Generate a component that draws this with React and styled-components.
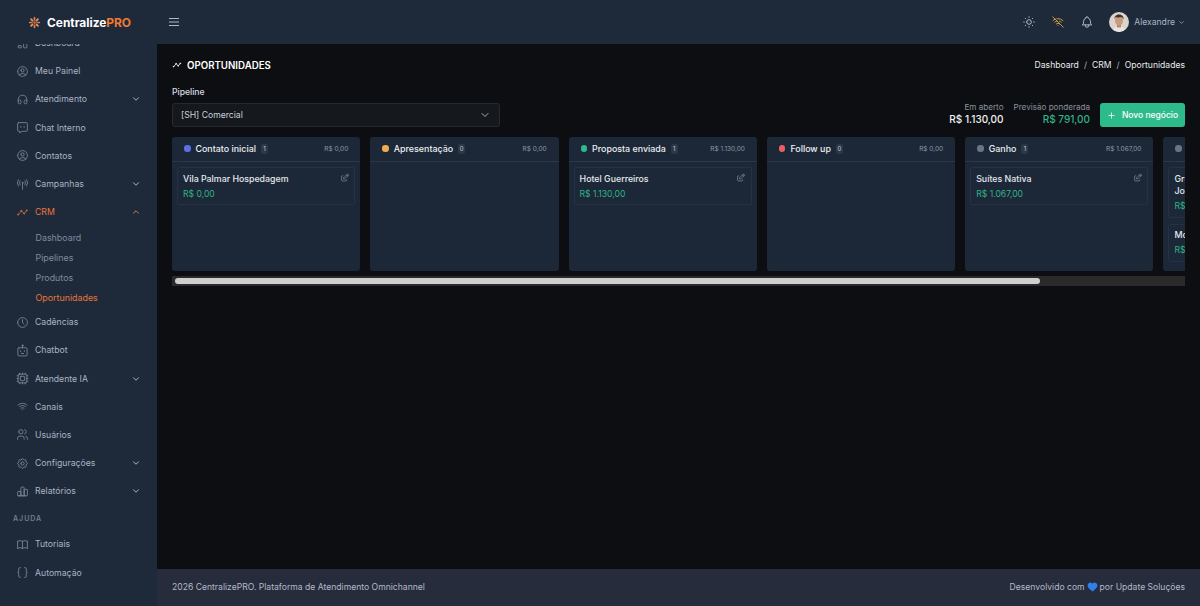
import React from "react";
import styled, { createGlobalStyle } from "styled-components";
import {
	TbLayoutDashboard, TbUserCircle, TbHeadphones, TbTimeline, TbClock,
	TbWifi, TbUsers, TbSettings, TbChartBar, TbBook, TbChevronDown,
	TbChevronUp, TbMenu2, TbSun, TbWifiOff, TbBell, TbEdit, TbPlus,
} from "react-icons/tb";
import { Cpu, Braces } from "lucide-react";

const Global = createGlobalStyle`
	* { box-sizing: border-box; }
	html, body { margin: 0; height: 100%; background: #0c0e12; }
	body { font-family: "Inter", "Liberation Sans", sans-serif; color: #fff; overflow: hidden; }
`;

const Shell = styled.div`
	display: grid;
	grid-template-columns: 157px 1fr;
	height: 606px;
`;

const Sidebar = styled.aside`
	background: #1e2a3a;
	display: flex;
	flex-direction: column;
	overflow: hidden;
	min-height: 0;
`;

const Brand = styled.div`
	height: 44px;
	flex: none;
	display: flex;
	align-items: center;
	gap: 6px;
	padding-left: 28px;
	background: #1e2a3a;
	position: relative;
	z-index: 1;
`;

const BrandName = styled.span`
	font-size: 11.9px;
	font-weight: 700;
	color: #fff;
	b { color: #ef7a33; font-weight: 700; }
`;

const NavScroll = styled.nav`
	flex: 1;
	min-height: 0;
	overflow: hidden;
`;

const NavList = styled.div`
	margin-top: -15px;
	display: flex;
	flex-direction: column;
`;

const NavItem = styled.div`
	height: 28.2px;
	display: flex;
	align-items: center;
	padding: 0 16px;
	gap: 6px;
	font-size: 8.7px;
	color: ${(p) => (p.$active ? "#e8743b" : "#a9b4c4")};
	svg.main { width: 13px; height: 13px; flex: none; stroke-width: 1.4; color: ${(p) => (p.$active ? "#e8743b" : "#8592a6")}; }
`;

const NavLabel = styled.span`
	flex: 1;
`;

const Caret = styled.span`
	display: flex;
	font-size: ${(p) => p.$size || 10}px;
	margin-left: ${(p) => p.$pull || 0}px;
	svg { stroke-width: 2.4; }
`;

const SubList = styled.div`
	display: flex;
	flex-direction: column;
	padding-top: 1px;
`;

const SubItem = styled.div`
	height: 20.2px;
	display: flex;
	align-items: center;
	padding-left: 35.5px;
	font-size: 8.9px;
	color: ${(p) => (p.$active ? "#e8743b" : "#7f8b9d")};
`;

const NavSection = styled.div`
	height: 25px;
	padding-top: 1px;
	display: flex;
	align-items: center;
	padding-left: 13px;
	font-size: 7px;
	font-weight: 600;
	letter-spacing: 1px;
	color: #727e90;
`;

const Main = styled.div`
	display: flex;
	flex-direction: column;
	min-width: 0;
	min-height: 0;
`;

const Topbar = styled.header`
	height: 44px;
	flex: none;
	background: #1e2a3a;
	display: flex;
	align-items: center;
	justify-content: space-between;
	padding: 0 15px 0 10px;
`;

const IconBtn = styled.span`
	display: flex;
	font-size: ${(p) => p.$size || 14}px;
	color: ${(p) => p.$color || "#c3cbd6"};
	svg { stroke-width: 1.5; }
`;

const TopRight = styled.div`
	display: flex;
	align-items: center;
	gap: 15px;
`;

const UserBox = styled.div`
	display: flex;
	align-items: center;
	gap: 5px;
	font-size: 8.6px;
	color: #a9b4c4;
`;

const Avatar = styled.svg`
	width: 20px;
	height: 20px;
	border-radius: 50%;
`;

const Content = styled.main`
	flex: 1;
	min-height: 0;
	background: #0c0e12;
	padding: 14px 15px 0;
	display: flex;
	flex-direction: column;
`;

const TitleRow = styled.div`
	display: flex;
	align-items: center;
	justify-content: space-between;
	height: 14px;
`;

const PageTitle = styled.h1`
	margin: 0;
	display: flex;
	align-items: center;
	gap: 5px;
	font-size: 9.7px;
	font-weight: 600;
	color: #fff;
	svg { font-size: 10px; stroke-width: 1.8; }
`;

const Crumbs = styled.div`
	display: flex;
	gap: 5px;
	font-size: 8.6px;
	color: #e8ebef;
	i { font-style: normal; color: #a9b4c4; }
`;

const ToolRow = styled.div`
	display: flex;
	align-items: flex-end;
	justify-content: space-between;
	margin-top: 15px;
`;

const Field = styled.div`
	width: 328px;
`;

const FieldLabel = styled.div`
	font-size: 8.6px;
	font-weight: 500;
	color: #d9dde3;
	line-height: 11px;
	margin-bottom: 5px;
`;

const SelectBox = styled.div`
	height: 24px;
	border: 1px solid #252a31;
	background: #15181d;
	border-radius: 3px;
	display: flex;
	align-items: center;
	justify-content: space-between;
	padding: 0 8px;
	font-size: 8.65px;
	color: #ccd1d8;
	svg { font-size: 12px; color: #a9afb8; }
`;

const Stats = styled.div`
	display: flex;
	align-items: flex-end;
	gap: 10px;
`;

const Stat = styled.div`
	text-align: right;
`;

const StatLabel = styled.div`
	font-size: 8.1px;
	color: #8b929c;
	line-height: 10px;
`;

const StatValue = styled.div`
	font-size: 10px;
	font-weight: 500;
	line-height: 15px;
	color: ${(p) => (p.$green ? "#2fb387" : "#f2f3f5")};
`;

const PrimaryBtn = styled.button`
	height: 24px;
	width: 85px;
	border: 0;
	border-radius: 3px;
	background: #2dbb8c;
	color: #fff;
	font: inherit;
	font-size: 8.5px;
	font-weight: 500;
	white-space: nowrap;
	padding: 0;
	display: flex;
	align-items: center;
	justify-content: center;
	gap: 6px;
	svg { font-size: 9px; stroke-width: 2; }
`;

const Board = styled.div`
	margin-top: 10px;
	display: flex;
	gap: 10px;
	overflow: hidden;
`;

const Column = styled.section`
	flex: 0 0 188.3px;
	height: 134px;
	background: #1c2838;
	border-radius: 3px;
	overflow: hidden;
`;

const ColumnHead = styled.div`
	height: 25px;
	display: flex;
	align-items: center;
	padding: 0 12px 1px;
	border-bottom: 1px solid #2b3749;
`;

const Dot = styled.span`
	width: 6.5px;
	height: 6.5px;
	border-radius: 50%;
	background: ${(p) => p.$color};
	margin-right: 5px;
	flex: none;
`;

const ColumnName = styled.span`
	font-size: 8.9px;
	font-weight: 500;
	color: #eef0f3;
`;

const Count = styled.span`
	margin-left: 5px;
	width: 7px;
	height: 10px;
	border-radius: 2px;
	background: #2c3748;
	color: #c8ced7;
	font-size: 6px;
	display: flex;
	align-items: center;
	justify-content: center;
`;

const ColumnTotal = styled.span`
	margin-left: auto;
	font-size: 6.5px;
	color: #8f99a8;
`;

const ColumnBody = styled.div`
	padding: 5px 5px 0;
	display: flex;
	flex-direction: column;
	gap: 6px;
`;

const Card = styled.article`
	border: 1px solid #263244;
	border-radius: 2px;
	padding: 4.5px 5px 4.5px;
	position: relative;
`;

const CardName = styled.div`
	font-size: 8.8px;
	font-weight: 500;
	line-height: 12.5px;
	color: #e6e9ed;
	padding-right: 16px;
`;

const CardValue = styled.div`
	margin-top: 2.5px;
	font-size: 8.6px;
	line-height: 12px;
	color: #2fb387;
`;

const EditIcon = styled(TbEdit)`
	position: absolute;
	top: 5px;
	right: 5px;
	font-size: 9.5px;
	stroke-width: 1.6;
	color: #8f99a8;
`;

const ScrollTrack = styled.div`
	margin-top: 5px;
	height: 10px;
	background: #2a2a2a;
	padding: 2px 145px 2px 3px;
`;

const ScrollThumb = styled.div`
	height: 6px;
	background: #cfcfcf;
	border-radius: 3px;
`;

const Footer = styled.footer`
	height: 37px;
	flex: none;
	background: #262c3c;
	display: flex;
	align-items: center;
	justify-content: space-between;
	padding: 0 15px 2px;
	font-size: 8.6px;
	color: #b3bac6;
`;

const Credit = styled.span`
	display: flex;
	align-items: center;
	gap: 2px;
`;

const ChatIcon = ({ className }) => (
	<svg className={className} viewBox="0 0 24 24" fill="none" stroke="currentColor" strokeLinecap="round" strokeLinejoin="round">
		<path d="M5 3h14a2 2 0 0 1 2 2v12a2 2 0 0 1-2 2h-8l-4 3v-3H5a2 2 0 0 1-2-2V5a2 2 0 0 1 2-2z" />
		<path d="M9 11h.01M15 11h.01" strokeWidth="2.4" />
	</svg>
);

const AntennaIcon = ({ className }) => (
	<svg className={className} viewBox="0 0 24 24" fill="none" stroke="currentColor" strokeLinecap="round" strokeLinejoin="round">
		<path d="M12 11v10" />
		<circle cx="12" cy="9" r="1" />
		<path d="M7.500 5.500a6 6 0 0 0 0 7M16.500 5.500a6 6 0 0 1 0 7M4.500 3a10 10 0 0 0 0 12M19.500 3a10 10 0 0 1 0 12" />
	</svg>
);

const BotIcon = ({ className }) => (
	<svg className={className} viewBox="0 0 24 24" fill="none" stroke="currentColor" strokeLinecap="round" strokeLinejoin="round">
		<rect x="3.500" y="7" width="17" height="15" rx="2" />
		<path d="M12 7V3.500" />
		<circle cx="12" cy="2.500" r="1" />
		<path d="M8.500 13h.01M15.500 13h.01" strokeWidth="2.4" />
		<path d="M10 17.500h4" />
	</svg>
);

const menu = [
	{ icon: TbLayoutDashboard, label: "Dashboard" },
	{ icon: TbUserCircle, label: "Meu Painel" },
	{ icon: TbHeadphones, label: "Atendimento", caret: true },
	{ icon: ChatIcon, label: "Chat Interno" },
	{ icon: TbUserCircle, label: "Contatos" },
	{ icon: AntennaIcon, label: "Campanhas", caret: true },
	{ icon: TbTimeline, label: "CRM", active: true, sub: ["Dashboard", "Pipelines", "Produtos", "Oportunidades"] },
	{ icon: TbClock, label: "Cadências" },
	{ icon: BotIcon, label: "Chatbot" },
	{ icon: Cpu, label: "Atendente IA", caret: true },
	{ icon: TbWifi, label: "Canais" },
	{ icon: TbUsers, label: "Usuários" },
	{ icon: TbSettings, label: "Configurações", caret: true },
	{ icon: TbChartBar, label: "Relatórios", caret: true },
	{ section: "AJUDA" },
	{ icon: TbBook, label: "Tutoriais" },
	{ icon: Braces, label: "Automação" },
];

const columns = [
	{ name: "Contato inicial", color: "#5d6ee6", count: 1, total: "R$ 0,00", cards: [{ name: "Vila Palmar Hospedagem", value: "R$ 0,00" }] },
	{ name: "Apresentação", color: "#f0ad4e", count: 0, total: "R$ 0,00", cards: [] },
	{ name: "Proposta enviada", color: "#2dbb8c", count: 1, total: "R$ 1.130,00", cards: [{ name: "Hotel Guerreiros", value: "R$ 1.130,00" }] },
	{ name: "Follow up", color: "#ee5d63", count: 0, total: "R$ 0,00", cards: [] },
	{ name: "Ganho", color: "#6b7480", count: 1, total: "R$ 1.067,00", cards: [{ name: "Suítes Nativa", value: "R$ 1.067,00" }] },
	{ name: "Perdido", color: "#6b7480", count: 2, total: "R$ 0,00", cards: [
		{ name: "Grupo Hoteleiro Vale do Sol Joinville Norte", value: "R$ 0,00" },
		{ name: "Morada do Sol", value: "R$ 0,00" },
	] },
];

const Logo = () => (
	<svg width="13" height="13" viewBox="0 0 24 24">
		{[0, 45, 90, 135, 180, 225, 270, 315].map((a, i) => (
			<g key={a} transform={`rotate(${a} 12 12)`}>
				<rect x="10.4" y="1.5" width="3.2" height="7" rx="1.6" fill={i % 2 ? "#c9a27c" : "#ef7a33"} />
			</g>
		))}
		<circle cx="12" cy="12" r="2.6" fill="#d9572a" />
	</svg>
);

const UserPhoto = () => (
	<Avatar viewBox="0 0 40 40">
		<rect width="40" height="40" fill="#d9d4cc" />
		<path d="M6 40c1-8 7-11 14-11s13 3 14 11z" fill="#e9e6e1" />
		<rect x="16" y="23" width="8" height="8" fill="#b98a6e" />
		<ellipse cx="20" cy="17" rx="8" ry="10" fill="#c99a7c" />
		<path d="M11 15c-1-7 4-10 9-10s10 3 9 10c-1-3-3-5-5-5-4 1-8 1-10 0-2 1-3 3-3 5z" fill="#3d332c" />
	</Avatar>
);

const Heart = () => (
	<svg width="11" height="10" viewBox="0 0 24 22">
		<path d="M12 21C5 15 1 11.500 1 7a6 6 0 0 1 11-3 6 6 0 0 1 11 3c0 4.500-4 8-11 14z" fill="#2f80e8" />
	</svg>
);

export default function App() {
	return (
		<Shell>
			<Global />
			<Sidebar>
				<Brand>
					<Logo />
					<BrandName>Centralize<b>PRO</b></BrandName>
				</Brand>
				<NavScroll>
					<NavList>
						{menu.map((m) =>
							m.section ? (
								<NavSection key={m.section}>{m.section}</NavSection>
							) : (
								<React.Fragment key={m.label}>
									<NavItem $active={m.active}>
										<m.icon className="main" />
										<NavLabel>{m.label}</NavLabel>
										{m.caret && <Caret><TbChevronDown /></Caret>}
										{m.sub && <Caret><TbChevronUp /></Caret>}
									</NavItem>
									{m.sub && (
										<SubList>
											{m.sub.map((s) => (
												<SubItem key={s} $active={s === "Oportunidades"}>{s}</SubItem>
											))}
										</SubList>
									)}
								</React.Fragment>
							)
						)}
					</NavList>
				</NavScroll>
			</Sidebar>
			<Main>
				<Topbar>
					<IconBtn $size={14}><TbMenu2 /></IconBtn>
					<TopRight>
						<IconBtn><TbSun /></IconBtn>
						<IconBtn $color="#e0a63f"><TbWifiOff /></IconBtn>
						<IconBtn><TbBell /></IconBtn>
						<UserBox>
							<UserPhoto />
							Alexandre
							<Caret $size={7} $pull={-2}><TbChevronDown /></Caret>
						</UserBox>
					</TopRight>
				</Topbar>
				<Content>
					<TitleRow>
						<PageTitle><TbTimeline /> OPORTUNIDADES</PageTitle>
						<Crumbs>Dashboard <i>/</i> CRM <i>/</i> Oportunidades</Crumbs>
					</TitleRow>
					<ToolRow>
						<Field>
							<FieldLabel>Pipeline</FieldLabel>
							<SelectBox>[SH] Comercial <TbChevronDown /></SelectBox>
						</Field>
						<Stats>
							<Stat>
								<StatLabel>Em aberto</StatLabel>
								<StatValue>R$ 1.130,00</StatValue>
							</Stat>
							<Stat>
								<StatLabel>Previsão ponderada</StatLabel>
								<StatValue $green>R$ 791,00</StatValue>
							</Stat>
							<PrimaryBtn><TbPlus /> Novo negócio</PrimaryBtn>
						</Stats>
					</ToolRow>
					<Board>
						{columns.map((c) => (
							<Column key={c.name}>
								<ColumnHead>
									<Dot $color={c.color} />
									<ColumnName>{c.name}</ColumnName>
									<Count>{c.count}</Count>
									<ColumnTotal>{c.total}</ColumnTotal>
								</ColumnHead>
								<ColumnBody>
									{c.cards.map((k) => (
										<Card key={k.name}>
											<CardName>{k.name}</CardName>
											<CardValue>{k.value}</CardValue>
											<EditIcon />
										</Card>
									))}
								</ColumnBody>
							</Column>
						))}
					</Board>
					<ScrollTrack><ScrollThumb /></ScrollTrack>
				</Content>
				<Footer>
					<span>2026 CentralizePRO. Plataforma de Atendimento Omnichannel</span>
					<Credit>Desenvolvido com <Heart /> por Update Soluções</Credit>
				</Footer>
			</Main>
		</Shell>
	);
}
